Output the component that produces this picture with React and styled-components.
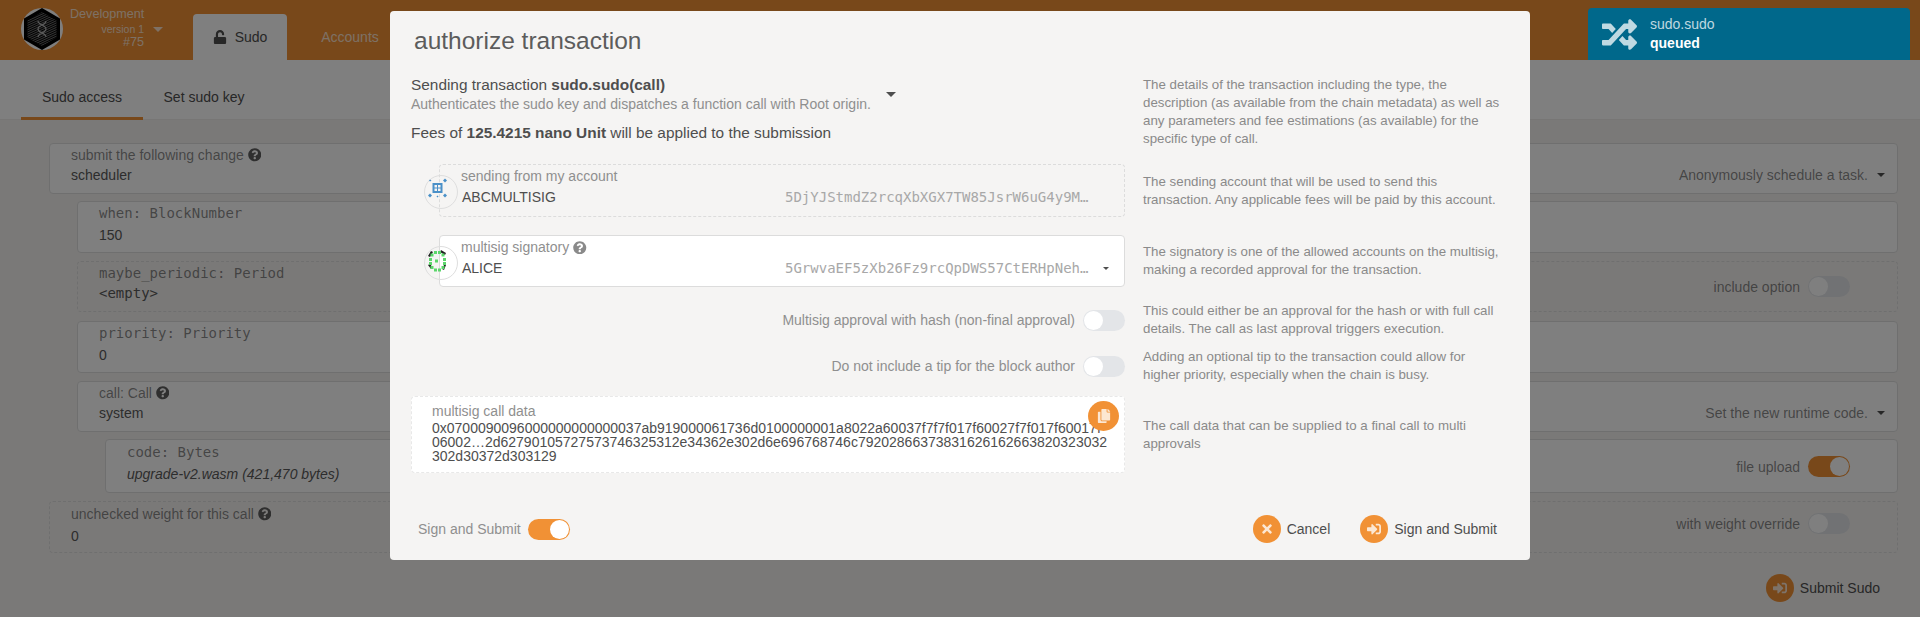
import React from "react"
import styled, { createGlobalStyle } from "styled-components"
import { FaUnlock, FaRandom, FaCopy, FaSignInAlt, FaTimes, FaQuestionCircle } from "react-icons/fa"

const Global = createGlobalStyle`
  html, body {
    margin: 0;
    padding: 0;
    height: 100%;
    overflow: hidden;
  }
  body {
    background: #f5f3f1;
    font-family: "Liberation Sans", Arial, sans-serif;
    font-size: 14px;
    color: #4e4e4e;
  }
  * {
    box-sizing: border-box;
  }
`

const mono = '"DejaVu Sans Mono", monospace'

const Page = styled.div`
  height: 617px;
  display: flex;
  flex-direction: column;
`

const TopBar = styled.div`
  height: 60px;
  flex: none;
  background: #f19135;
  display: flex;
  padding-left: 21px;
`

const Logo = styled.svg`
  width: 42px;
  height: 42px;
  margin-top: 8px;
  flex: none;
`

const ChainInfo = styled.div`
  width: 74px;
  margin-left: 7px;
  padding-top: 6px;
  text-align: right;
  color: rgba(255, 255, 255, 0.75);
`

const ChainName = styled.div`
  font-size: 12.6px;
  line-height: 16px;
  white-space: nowrap;
`

const ChainVersion = styled.div`
  font-size: 10.5px;
  line-height: 14px;
`

const ChainBlock = styled.div`
  font-size: 12.6px;
  line-height: 13px;
`

const Caret = styled.i`
  display: inline-block;
  flex: none;
  width: 0;
  height: 0;
  border-left: ${p => p.$size || 4}px solid transparent;
  border-right: ${p => p.$size || 4}px solid transparent;
  border-top: ${p => p.$size || 4}px solid ${p => p.$color || "#4e4e4e"};
`

const NavCaret = styled(Caret).attrs({ $size: 5, $color: "rgba(255, 255, 255, 0.75)" })`
  margin: 27px 0 0 9px;
`

const NavTab = styled.div`
  height: 46px;
  margin-top: 14px;
  margin-left: ${p => p.$left}px;
  width: ${p => p.$width}px;
  display: flex;
  align-items: center;
  justify-content: center;
  gap: 8px;
  font-size: 14px;
  border-radius: 4px 4px 0 0;
  background: ${p => (p.$active ? "#fff" : "transparent")};
  color: ${p => (p.$active ? "#4e4e4e" : "rgba(255, 255, 255, 0.75)")};
`

const Notice = styled.div`
  position: absolute;
  left: 1588px;
  top: 8px;
  width: 322px;
  height: 52px;
  background: #00688b;
  border-radius: 4px 4px 0 0;
  display: flex;
  align-items: center;
  gap: 13px;
  padding-left: 14px;
  color: #fff;
  z-index: 20;
  svg {
    color: rgba(255, 255, 255, 0.75);
    font-size: 35px;
  }
`

const NoticeText = styled.div`
  font-size: 14px;
  line-height: 19px;
  color: rgba(255, 255, 255, 0.75);
  b {
    display: block;
    color: #fff;
  }
`

const SubTabs = styled.div`
  height: 60px;
  flex: none;
  background: #fff;
  padding-left: 21px;
  display: flex;
  border-bottom: 1px solid #eeecea;
`

const SubTab = styled.div`
  width: ${p => p.$width}px;
  height: 60px;
  display: flex;
  align-items: center;
  justify-content: center;
  padding-top: 17px;
  font-size: 14px;
  color: #4e4e4e;
  border-bottom: 3px solid ${p => (p.$active ? "#f19135" : "transparent")};
`

const Params = styled.div`
  padding: 23px 22px 0 49px;
  display: flex;
  flex-direction: column;
`

const ParamBox = styled.div`
  height: ${p => p.$h}px;
  margin-top: ${p => p.$top || 0}px;
  margin-left: ${p => (p.$level || 0) * 28}px;
  padding: ${p => p.$pad || 2}px 21px 0;
  border-radius: 4px;
  border: 1px ${p => (p.$dashed ? "dashed" : "solid")} #dfdfdf;
  background: ${p => (p.$dashed ? "transparent" : "#fff")};
  position: relative;
  display: flex;
  flex-direction: column;
`

const ParamLabel = styled.div`
  line-height: 18px;
  color: rgba(78, 78, 78, 0.66);
  display: flex;
  align-items: center;
  gap: 4px;
  font-family: ${p => (p.$mono ? mono : "inherit")};
  font-size: 14px;
  svg {
    font-size: 13.5px;
    color: rgba(78, 78, 78, 0.9);
  }
`

const ParamValue = styled.div`
  font-size: 14px;
  line-height: 18px;
  margin-top: ${p => p.$top || 2}px;
  color: #5a5a5a;
  font-style: ${p => (p.$italic ? "italic" : "normal")};
  font-family: ${p => (p.$mono ? mono : "inherit")};
`

const ParamSide = styled.div`
  position: absolute;
  right: ${p => p.$right || 12}px;
  top: ${p => p.$top}px;
  display: flex;
  align-items: center;
  gap: ${p => p.$gap || 8}px;
  font-size: 14px;
  color: rgba(78, 78, 78, 0.66);
`

const Toggle = styled.span`
  display: inline-block;
  flex: none;
  width: 42px;
  height: 21px;
  border-radius: 11px;
  position: relative;
  background: ${p => (p.$on ? "#f19135" : "#e3e5e8")};
  &:after {
    content: "";
    position: absolute;
    top: 1px;
    width: 19px;
    height: 19px;
    border-radius: 50%;
    background: #fff;
    left: ${p => (p.$on ? 22 : 1)}px;
  }
`

const SubmitRow = styled.div`
  display: flex;
  justify-content: flex-end;
  padding: 21px 40px 0 0;
`

const IconButton = styled.div`
  display: flex;
  align-items: center;
  gap: 6px;
  font-size: 14px;
  color: #4e4e4e;
`

const IconCircle = styled.span`
  width: 28px;
  height: 28px;
  border-radius: 50%;
  background: #f19135;
  color: rgba(255, 255, 255, 0.78);
  display: flex;
  align-items: center;
  justify-content: center;
  font-size: 14px;
`

const Overlay = styled.div`
  position: fixed;
  inset: 0;
  background: rgba(0, 0, 0, 0.5);
  z-index: 10;
`

const Modal = styled.div`
  position: fixed;
  left: 390px;
  top: 11px;
  width: 1140px;
  height: 549px;
  background: #f5f4f3;
  border-radius: 4px;
  z-index: 11;
  padding: 0 21px;
  display: flex;
  flex-direction: column;
`

const ModalTitle = styled.div`
  font-size: 24.5px;
  line-height: 28px;
  height: 65px;
  padding: 16px 0 0 3px;
  color: #5c5c5c;
  flex: none;
`

const Row = styled.div`
  display: grid;
  grid-template-columns: 714px 1fr;
  column-gap: 18px;
  align-items: center;
  margin-top: ${p => p.$top || 0}px;
  flex: none;
`

const Hint = styled.div`
  font-size: 13.3px;
  line-height: 18px;
  color: #8a8a8a;
  width: 360px;
`

const TxInfo = styled.div`
  align-self: start;
`

const TxTitle = styled.div`
  font-size: 15.4px;
  line-height: 18px;
`

const TxDesc = styled.div`
  font-size: 14px;
  line-height: 20px;
  color: #8f8f8f;
  display: flex;
  align-items: flex-start;
  gap: 15px;
`

const TxCaret = styled(Caret).attrs({ $size: 5 })`
  margin-top: -2px;
`

const TxFees = styled.div`
  font-size: 15.4px;
  line-height: 18px;
  margin-top: 10px;
`

const AccountBox = styled.div`
  margin-left: 28px;
  height: ${p => p.$h}px;
  border-radius: 4px;
  border: 1px ${p => (p.$dashed ? "dashed" : "solid")} #dcdcdc;
  background: ${p => (p.$dashed ? "transparent" : "#fff")};
  position: relative;
  padding: 3px 10px 0 21px;
`

const Identicon = styled.span`
  position: absolute;
  left: -16px;
  top: 10px;
  width: 34px;
  height: 34px;
  border-radius: 50%;
  border: 1px solid #dedede;
  svg {
    display: block;
  }
`

const FieldLabel = styled.div`
  font-size: 14px;
  line-height: 17px;
  color: #8f8f8f;
  display: flex;
  align-items: center;
  gap: 4px;
  svg {
    font-size: 13.5px;
    color: #8a8a8a;
  }
`

const AccountLine = styled.div`
  display: flex;
  align-items: center;
  margin-top: 3px;
  margin-left: 1px;
  line-height: 18px;
  font-size: 14px;
`

const AccountName = styled.span`
  width: 323px;
  flex: none;
`

const AccountAddress = styled.span`
  font-family: ${mono};
  font-size: 14px;
  color: #a8a8a8;
  width: 305px;
  flex: none;
  white-space: nowrap;
  margin-right: 13px;
`

const ToggleField = styled.div`
  display: flex;
  justify-content: flex-end;
  align-items: center;
  gap: 8px;
  font-size: 14px;
  color: #8f8f8f;
`

const CallData = styled.div`
  height: 77px;
  background: #fff;
  border: 1px dashed #e8e8e8;
  border-radius: 4px;
  padding: 6px 16px 0 20px;
  position: relative;
`

const CallBytes = styled.div`
  font-size: 14px;
  line-height: 14px;
  margin-top: 1px;
  color: #4e4e4e;
  word-break: break-all;
`

const CopyButton = styled(IconCircle)`
  position: absolute;
  right: 5px;
  top: 4px;
  width: 31px;
  height: 30px;
`

const Footer = styled.div`
  margin-top: auto;
  height: 45px;
  padding: 0 12px 0 7px;
  display: flex;
  align-items: flex-start;
  justify-content: space-between;
  flex: none;
`

const FooterSwitch = styled.div`
  display: flex;
  align-items: center;
  gap: 7px;
  height: 28px;
  font-size: 14px;
  color: #8f8f8f;
`

const FooterButtons = styled.div`
  display: flex;
  gap: 30px;
`

const Help = () => <FaQuestionCircle />

const BlueIdenticon = () => (
  <svg width="32" height="32" viewBox="0 0 32 32">
    <rect x="7.5" y="7" width="10" height="10" fill="#4a90c8" />
    <g fill="#f5f4f3">
      <rect x="9.5" y="9" width="2.5" height="2.5" />
      <rect x="13" y="9" width="2.5" height="2.5" />
      <rect x="9.5" y="12.5" width="2.5" height="2.5" />
      <rect x="13" y="12.5" width="2.5" height="2.5" />
    </g>
    <g fill="#4a90c8">
      <path d="M20 2.5l2 2-2 2-2-2z" />
      <path d="M5 3.5l1.5 1-1.5 1-1-1z" />
      <path d="M5 17.5l2 2-2 2-2-2z" />
      <path d="M20 17.5l2 2-2 2-2-2z" />
      <path d="M12.5 19.5l1 1-1 1-1-1z" />
    </g>
  </svg>
)

const greenDots = [
  [10, 12.5], [9, 4], [13, 4], [5.5, 6.5], [16.5, 6.5], [4, 11], [18, 11],
  [4, 15], [18, 15], [5.5, 19], [16.5, 19], [9, 21.5], [13, 21.5],
]

const GreenIdenticon = () => (
  <svg width="32" height="32" viewBox="0 0 32 32">
    <g fill="#222">
      <path d="M3 9l3-5 2 1-3 5z" />
      <path d="M16 3l5 3-1 2-5-3z" />
      <path d="M3 18l3 4 2-1-3-4z" />
      <path d="M21 18l-2 5-2-1 2-4z" />
    </g>
    <g fill="#5bd66b">
      {greenDots.map(([x, y]) => (
        <rect key={`${x}-${y}`} x={x} y={y} width="3" height="3" />
      ))}
    </g>
  </svg>
)

const ChainLogo = () => (
  <Logo viewBox="0 0 42 42">
    <defs>
      <pattern id="stripes" width="3" height="2" patternUnits="userSpaceOnUse" patternTransform="rotate(-25)">
        <rect width="3" height="0.9" fill="#777" />
      </pattern>
    </defs>
    <circle cx="21" cy="21" r="21" fill="#fff" />
    <polygon points="21,0 39,10.5 39,31.5 21,42 3,31.5 3,10.5" fill="#000" />
    <polygon points="21,4 35.5,12.5 35.5,29.5 21,38 6.5,29.5 6.5,12.5" fill="url(#stripes)" />
    <path d="M17 13c0 4 8 4 8 8s-8 4-8 8M25 13c0 4-8 4-8 8s8 4 8 8" fill="none" stroke="#bbb" strokeWidth="1.2" />
  </Logo>
)

const App = () => (
  <Page>
    <Global />
    <TopBar>
      <ChainLogo />
      <ChainInfo>
        <ChainName>Development</ChainName>
        <ChainVersion>version 1</ChainVersion>
        <ChainBlock>#75</ChainBlock>
      </ChainInfo>
      <NavCaret />
      <NavTab $active $left={30} $width={94}>
        <FaUnlock />
        Sudo
      </NavTab>
      <NavTab $left={18} $width={90}>Accounts</NavTab>
    </TopBar>
    <Notice>
      <FaRandom />
      <NoticeText>
        sudo.sudo
        <b>queued</b>
      </NoticeText>
    </Notice>
    <SubTabs>
      <SubTab $active $width={122}>Sudo access</SubTab>
      <SubTab $width={122}>Set sudo key</SubTab>
    </SubTabs>
    <Params>
      <ParamBox $h={51}>
        <ParamLabel>submit the following change <Help /></ParamLabel>
        <ParamValue>scheduler</ParamValue>
        <ParamSide $top={23} $gap={9}>Anonymously schedule a task. <Caret /></ParamSide>
      </ParamBox>
      <ParamBox $level={1} $top={7} $h={52}>
        <ParamLabel $mono>when: BlockNumber</ParamLabel>
        <ParamValue $top={4}>150</ParamValue>
      </ParamBox>
      <ParamBox $level={1} $top={8} $dashed $h={51}>
        <ParamLabel $mono>maybe_periodic: Period</ParamLabel>
        <ParamValue $mono>&lt;empty&gt;</ParamValue>
        <ParamSide $top={14} $right={47}>include option <Toggle /></ParamSide>
      </ParamBox>
      <ParamBox $level={1} $top={9} $h={52}>
        <ParamLabel $mono>priority: Priority</ParamLabel>
        <ParamValue $top={4}>0</ParamValue>
      </ParamBox>
      <ParamBox $level={1} $top={8} $h={51}>
        <ParamLabel>call: Call <Help /></ParamLabel>
        <ParamValue>system</ParamValue>
        <ParamSide $top={23} $gap={9}>Set the new runtime code. <Caret /></ParamSide>
      </ParamBox>
      <ParamBox $level={2} $top={7} $h={54} $pad={3}>
        <ParamLabel $mono>code: Bytes</ParamLabel>
        <ParamValue $italic $top={4}>upgrade-v2.wasm (421,470 bytes)</ParamValue>
        <ParamSide $top={16} $right={47}>file upload <Toggle $on /></ParamSide>
      </ParamBox>
      <ParamBox $top={8} $dashed $h={52} $pad={3}>
        <ParamLabel>unchecked weight for this call <Help /></ParamLabel>
        <ParamValue $top={4}>0</ParamValue>
        <ParamSide $top={11} $right={47}>with weight override <Toggle /></ParamSide>
      </ParamBox>
    </Params>
    <SubmitRow>
      <IconButton>
        <IconCircle><FaSignInAlt /></IconCircle>
        Submit Sudo
      </IconButton>
    </SubmitRow>
    <Overlay />
    <Modal>
      <ModalTitle>authorize transaction</ModalTitle>
      <Row>
        <TxInfo>
          <TxTitle>Sending transaction <b>sudo.sudo(call)</b></TxTitle>
          <TxDesc>
            <span>Authenticates the sudo key and dispatches a function call with Root origin.</span>
            <TxCaret />
          </TxDesc>
          <TxFees>Fees of <b>125.4215 nano Unit</b> will be applied to the submission</TxFees>
        </TxInfo>
        <Hint>The details of the transaction including the type, the description (as available from the chain metadata) as well as any parameters and fee estimations (as available) for the specific type of call.</Hint>
      </Row>
      <Row $top={16}>
        <AccountBox $dashed $h={53}>
          <Identicon><BlueIdenticon /></Identicon>
          <FieldLabel>sending from my account</FieldLabel>
          <AccountLine>
            <AccountName>ABCMULTISIG</AccountName>
            <AccountAddress>5DjYJStmdZ2rcqXbXGX7TW85JsrW6uG4y9M…</AccountAddress>
          </AccountLine>
        </AccountBox>
        <Hint>The sending account that will be used to send this transaction. Any applicable fees will be paid by this account.</Hint>
      </Row>
      <Row $top={18}>
        <AccountBox $h={52}>
          <Identicon><GreenIdenticon /></Identicon>
          <FieldLabel>multisig signatory <Help /></FieldLabel>
          <AccountLine>
            <AccountName>ALICE</AccountName>
            <AccountAddress>5GrwvaEF5zXb26Fz9rcQpDWS57CtERHpNeh…</AccountAddress>
            <Caret $size={3.5} />
          </AccountLine>
        </AccountBox>
        <Hint>The signatory is one of the allowed accounts on the multisig, making a recorded approval for the transaction.</Hint>
      </Row>
      <Row $top={15}>
        <ToggleField>Multisig approval with hash (non-final approval) <Toggle /></ToggleField>
        <Hint>This could either be an approval for the hash or with full call details. The call as last approval triggers execution.</Hint>
      </Row>
      <Row $top={10}>
        <ToggleField>Do not include a tip for the block author <Toggle /></ToggleField>
        <Hint>Adding an optional tip to the transaction could allow for higher priority, especially when the chain is busy.</Hint>
      </Row>
      <Row $top={12}>
        <CallData>
          <FieldLabel>multisig call data</FieldLabel>
          <CallBytes>0x0700090096000000000000037ab919000061736d0100000001a8022a60037f7f7f017f60027f7f017f60017f06002…2d62790105727573746325312e34362e302d6e696768746c79202866373831626162663820323032302d30372d303129</CallBytes>
          <CopyButton><FaCopy /></CopyButton>
        </CallData>
        <Hint>The call data that can be supplied to a final call to multi approvals</Hint>
      </Row>
      <Footer>
        <FooterSwitch>Sign and Submit <Toggle $on /></FooterSwitch>
        <FooterButtons>
          <IconButton>
            <IconCircle><FaTimes /></IconCircle>
            Cancel
          </IconButton>
          <IconButton>
            <IconCircle><FaSignInAlt /></IconCircle>
            Sign and Submit
          </IconButton>
        </FooterButtons>
      </Footer>
    </Modal>
  </Page>
)

export default App
